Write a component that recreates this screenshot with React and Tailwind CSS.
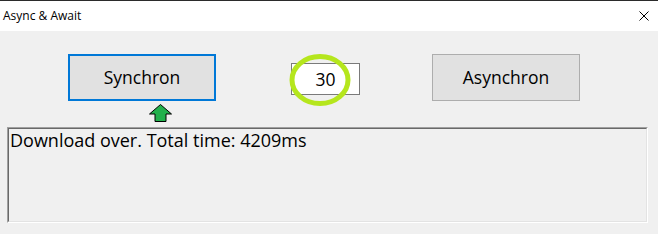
import React from "react";

export default function App() {
  return (
    <div
      className="w-[658px] h-[234px] bg-[#f0f0f0] border-t border-[#2b2b2b] overflow-hidden text-black"
      style={{ fontFamily: '"Open Sans", "Noto Sans", sans-serif' }}
    >
      {/* title bar */}
      <div className="h-[30px] bg-white flex items-center justify-between pl-[3px] pr-[9px]">
        <span className="text-[12px] leading-none">Async &amp; Await</span>
        <svg width="10" height="10" viewBox="0 0 10 10">
          <path d="M0.5 0.5 L9.5 9.5 M9.5 0.5 L0.5 9.5" stroke="#000" strokeWidth="1" />
        </svg>
      </div>

      {/* controls row */}
      <div className="flex items-start pl-[68px] pt-[23px]">
        <div className="relative">
          <button className="w-[148px] h-[47px] bg-[#e1e1e1] border-2 border-[#0078d7] text-[17.5px] flex items-center justify-center pb-[1px]">
            Synchron
          </button>
          <svg
            className="absolute left-[81px] top-[50px]"
            width="23"
            height="18"
            viewBox="0 0 23 18"
          >
            <polygon
              points="11.5,0.5 22.5,10 17,10 17,17.5 6,17.5 6,10 0.5,10"
              fill="#22b14c"
              stroke="#000"
              strokeWidth="1"
            />
          </svg>
        </div>

        <div className="relative ml-[75px] mt-[9px]">
          <div className="w-[69px] h-[32px] bg-white border border-[#7a7a7a] flex items-center justify-center text-[17.5px]">
            30
          </div>
          <svg
            className="absolute left-[-2px] top-[-9px]"
            width="62"
            height="52"
            viewBox="0 0 62 52"
          >
            <ellipse cx="31" cy="26" rx="28" ry="23.5" fill="none" stroke="#b5e61d" strokeWidth="5" />
          </svg>
        </div>

        <button className="ml-[72px] w-[148px] h-[47px] bg-[#e1e1e1] border border-[#adadad] text-[17.5px] flex items-center justify-center pb-[1px]">
          Asynchron
        </button>
      </div>

      {/* output box */}
      <div className="ml-[7px] mt-[26px] w-[641px] h-[96px] border border-t-[#a0a0a0] border-l-[#a0a0a0] border-r-white border-b-white">
        <div className="w-full h-full border border-t-[#696969] border-l-[#696969] border-r-[#e3e3e3] border-b-[#e3e3e3] pl-[1px] pt-[1px] text-[18px] leading-[20px]">
          Download over. Total time: 4209ms
        </div>
      </div>
    </div>
  );
}
